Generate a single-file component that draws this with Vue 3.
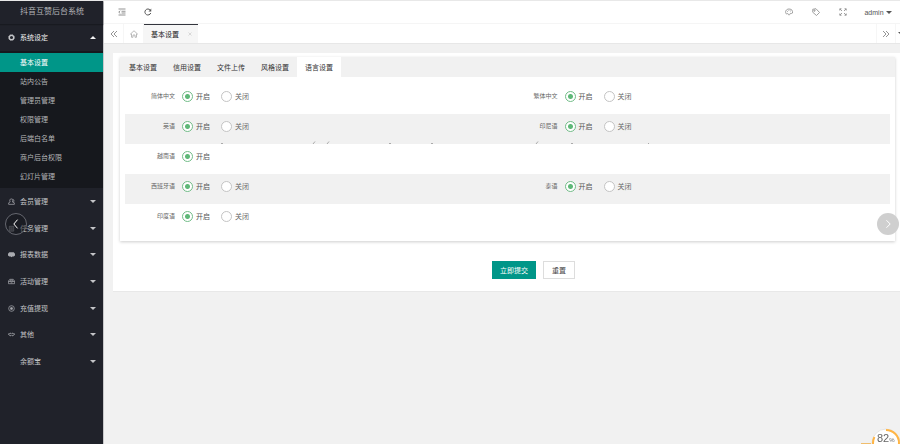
<script setup>
import { ref, reactive } from 'vue'

const subItems = ['基本设置', '站内公告', '管理员管理', '权限管理', '后端白名单', '商户后台权限', '幻灯片管理']
const activeSub = ref('基本设置')
const groups = [
  { name: '会员管理', icon: 'user' },
  { name: '任务管理', icon: 'task' },
  { name: '报表数据', icon: 'chat' },
  { name: '活动管理', icon: 'gift' },
  { name: '充值提现', icon: 'coin' },
  { name: '其他', icon: 'link' },
  { name: '余额宝', icon: '' }
]
const tabs = ['基本设置', '信用设置', '文件上传', '风格设置', '语言设置']
const activeTab = ref('语言设置')
const rows = [
  [{ key: 'zhs', label: '简体中文' }, { key: 'zht', label: '繁体中文' }],
  [{ key: 'en', label: '英语' }, { key: 'id', label: '印尼语' }],
  [{ key: 'vi', label: '越南语', single: true }],
  [{ key: 'es', label: '西班牙语' }, { key: 'th', label: '泰语' }],
  [{ key: 'hi', label: '印度语' }]
]
const state = reactive({ zhs: 'on', zht: 'on', en: 'on', id: 'on', vi: 'on', es: 'on', th: 'on', hi: 'on' })
const reset = () => Object.keys(state).forEach((k) => { state[k] = 'on' })
</script>

<template>
  <div class="app">
    <aside class="side">
      <div class="brand">抖音互赞后台系统</div>
      <nav>
        <button class="group open" type="button">
          <svg class="gi" viewBox="0 0 16 16"><circle cx="8" cy="8" r="5" fill="none" stroke="currentColor" stroke-width="3" /><circle cx="8" cy="8" r="6.7" fill="none" stroke="currentColor" stroke-width="2" stroke-dasharray="2.6 2.6" /></svg>
          <span>系统设定</span>
          <svg class="caret" viewBox="0 0 6 3"><path d="M0 3L3 0L6 3Z" /></svg>
        </button>
        <ul class="sub">
          <li v-for="s in subItems" :key="s">
            <a href="#" :class="{ on: s === activeSub }" @click.prevent="activeSub = s">{{ s }}</a>
          </li>
        </ul>
        <div class="groups">
          <button v-for="g in groups" :key="g.name" class="group" type="button">
            <svg class="gi" viewBox="0 0 16 16" fill="none" stroke="currentColor" stroke-width="1.6">
              <template v-if="g.icon === 'user'"><path d="M5 9C3 6 4 2 7.500 2S12 6 10 9M5 9L1.500 11V14.500H14.500V11L10 9M11 2.500C14 4 14 7 12.500 9.500" /></template>
              <template v-else-if="g.icon === 'task'"><path d="M3 3H13V14H3ZM5 6.500H11M5 9H11M5 11.500H11" /></template>
              <template v-else-if="g.icon === 'chat'"><path d="M3 3H13L16 6V10L13 12.500H10L8 14.500L6 12.500H3L0 10V6Z" fill="currentColor" stroke="none" /></template>
              <template v-else-if="g.icon === 'gift'"><path d="M1 7L4 3H12L15 7V13H1ZM1 8H15M5 8V5H11V8M6 11H10" /></template>
              <template v-else-if="g.icon === 'coin'"><circle cx="8" cy="8" r="6.500" /><circle cx="8" cy="8" r="2.500" fill="currentColor" /></template>
              <template v-else-if="g.icon === 'link'"><path d="M0 7H3C4 4 7 5 8 7C9 5 12 4 13 7H16M2 8C4 12 7 11 8 9C9 11 12 12 14 8" stroke-width="2" /></template>
            </svg>
            <span>{{ g.name }}</span>
            <svg class="caret" viewBox="0 0 6 3"><path d="M0 0H6L3 3Z" /></svg>
          </button>
        </div>
      </nav>
    </aside>

    <div class="main">
      <header class="top">
        <button type="button" aria-label="菜单"><svg viewBox="0 0 16 16"><path d="M1 2H15M7 6.500H15M7 10H15M1 14H15M4.500 5.500L1.500 8.200L4.500 11" /></svg></button>
        <button type="button" aria-label="刷新"><svg class="dark" viewBox="0 0 16 16"><path d="M13.500 10A6 6 0 1 1 12.500 4.200" /><path d="M14.500 1V7H9Z" class="fill" /></svg></button>
        <div class="right">
          <button type="button" aria-label="主题"><svg viewBox="0 0 16 16"><path d="M3 12C-1 8 2 2 8 2S16 6 15 10C14 12 12 10 10.500 11S10 14 8 14C6 14 7 11 5.500 11S4 13 3 12Z" /><path d="M4.500 7H6M7 5H8.500M10.500 6H12" /></svg></button>
          <button type="button" aria-label="标签"><svg viewBox="0 0 16 16"><path d="M1.500 2.500L8 1.500L15 9L9 15L1.500 8.500Z" /><circle cx="5" cy="5.300" r="1.300" /></svg></button>
          <button type="button" aria-label="全屏"><svg viewBox="0 0 16 16"><path d="M1.500 5V1.500H5M11 1.500H14.500V5M14.500 11V14.500H11M5 14.500H1.500V11M2 2L6 6M14 2L10 6M14 14L10 10M2 14L6 10" /></svg></button>
          <button type="button" class="user">admin<svg class="caret" viewBox="0 0 6 3"><path d="M0 0H6L3 3Z" /></svg></button>
        </div>
      </header>

      <div class="pages">
        <button type="button" aria-label="向左"><svg viewBox="0 0 16 16"><path d="M8 2L2 8L8 14M14 2L8 8L14 14" /></svg></button>
        <button type="button" aria-label="主页"><svg class="pale" viewBox="0 0 16 16"><path d="M1 8L8 1.500L15 8H13V14.500H10V10H6V14.500H3V8Z" /></svg></button>
        <div class="page">基本设置<button type="button" aria-label="关闭"><svg class="x" viewBox="0 0 8 8"><path d="M1 1L7 7M7 1L1 7" /></svg></button></div>
        <button type="button" class="next" aria-label="向右"><svg viewBox="0 0 16 16"><path d="M2 2L8 8L2 14M8 2L14 8L8 14" /></svg></button>
        <button type="button" class="more" aria-label="更多"><svg class="caret" viewBox="0 0 6 3"><path d="M0 0H6L3 3Z" /></svg></button>
      </div>

      <form class="card" @submit.prevent @reset.prevent="reset">
        <section class="panel">
          <div class="tabs" role="tablist">
            <button v-for="t in tabs" :key="t" type="button" role="tab" :class="{ on: t === activeTab }" @click="activeTab = t">{{ t }}</button>
          </div>
          <div class="rows">
            <div v-for="(row, i) in rows" :key="i" class="row">
              <div v-for="f in row" :key="f.key" class="field" role="radiogroup" :aria-labelledby="'l-' + f.key">
                <span :id="'l-' + f.key" class="name">{{ f.label }}</span>
                <label class="opt"><input v-model="state[f.key]" type="radio" :name="f.key" value="on" /><span>开启</span></label>
                <label v-if="!f.single" class="opt off"><input v-model="state[f.key]" type="radio" :name="f.key" value="off" /><span>关闭</span></label>
              </div>
              <svg v-if="i === 1" class="marks" viewBox="0 0 765 3" preserveAspectRatio="none"><path d="M96 2.500H98M188 3L190 0.500M202 3L204 0.500M264 2.500H266M306 2.500H308M411 3L413 0.500M446 2.500H448M523 2.500H524" /></svg>
            </div>
          </div>
        </section>
        <div class="actions">
          <button type="submit" class="btn primary">立即提交</button>
          <button type="reset" class="btn">重置</button>
        </div>
      </form>
    </div>

    <button class="nav prev" type="button" aria-label="上一张"><svg viewBox="0 0 16 16"><path d="M10.500 1L4.500 8L10.500 15" /></svg></button>
    <button class="nav forward" type="button" aria-label="下一张"><svg viewBox="0 0 16 16"><path d="M5.500 2L11.500 8L5.500 14" /></svg></button>
    <div class="gauge">
      <svg viewBox="0 0 30 30"><circle cx="15" cy="15" r="14" fill="#fff" stroke="#e4e4e4" stroke-width="1" /><circle cx="15" cy="15" r="13" fill="none" stroke="#ffb545" stroke-width="2" stroke-dasharray="67 15" transform="rotate(-90 15 15)" /></svg>
      <span>82<small>%</small></span>
    </div>
    <i class="gauge-tail"></i>
  </div>
</template>

<style>
body {
  background: #f1f1f1;
}
</style>

<style scoped>
.app {
  display: flex;
  box-sizing: border-box;
  min-height: 100vh;
  border-top: 1px solid #e8e8e8;
  font: 7px/1 "Liberation Sans", "Noto Sans CJK SC", sans-serif;
  color: #444;
  overflow: hidden;
}
button {
  display: flex;
  align-items: center;
  justify-content: center;
  padding: 0;
  border: 0;
  background: none;
  font: inherit;
  color: inherit;
}
svg {
  display: block;
  flex: none;
}
.side {
  flex: 0 0 104px;
  box-sizing: border-box;
  background: #20222a;
  color: #c4c5c8;
  border-right: 1px solid #c8c8ca;
}
.brand {
  height: 23px;
  line-height: 22px;
  padding-left: 20px;
  font-size: 8px;
  color: #b4b5b8;
  box-shadow: 0 1px 1px #181a20;
}
.group {
  width: 100%;
  height: 27px;
  justify-content: flex-start;
  gap: 5px;
  padding: 0 7px 0 8px;
}
.group.open {
  color: #f4f4f4;
}
.gi {
  width: 7px;
  height: 7px;
  color: #a9abb0;
}
.group.open .gi {
  color: #c4c5c8;
}
.caret {
  width: 6px;
  height: 3px;
  fill: currentColor;
  stroke: none;
}
.group .caret {
  margin-left: auto;
}
.sub {
  margin: 0;
  padding: 2px 0;
  list-style: none;
  background: #16181d;
}
.sub a {
  display: block;
  line-height: 19px;
  padding-left: 20px;
  color: #b4b5b7;
  text-decoration: none;
}
.sub a.on {
  background: #009688;
  color: #fff;
}
.groups {
  display: grid;
  grid-auto-rows: 1fr;
  min-height: 187px;
}
.groups .group {
  height: auto;
}
.main {
  flex: 1;
  min-width: 0;
}
.top,
.pages {
  display: flex;
  background: #fff;
}
.top {
  height: 22px;
  padding-left: 5px;
  border-bottom: 1px solid #f5f5f5;
}
.top button {
  width: 26px;
}
.top svg,
.pages svg {
  width: 8px;
  height: 8px;
  fill: none;
  stroke: #777;
  stroke-width: 1.6;
}
.top svg.dark {
  stroke: #555;
  stroke-width: 2;
}
.top svg .fill {
  fill: #555;
  stroke: none;
}
.top .right {
  display: flex;
  margin-left: auto;
}
.top .right svg {
  stroke: #888;
}
.top .right button {
  width: 27px;
}
.top .right .user {
  width: 44px;
  gap: 2px;
  color: #555;
}
.top svg.caret,
.top .right svg.caret,
.pages svg.caret {
  width: 6px;
  height: 3px;
  fill: #555;
  stroke: none;
}
.pages {
  height: 19px;
  border-bottom: 1px solid #e7e7e7;
}
.pages > button {
  width: 20px;
  border-right: 1px solid #f6f6f6;
}
.pages svg.pale {
  stroke: #aaa;
}
.pages svg.x {
  width: 4px;
  height: 4px;
  stroke: #bbb;
  stroke-width: 1;
}
.page {
  display: flex;
  align-items: center;
  gap: 9px;
  padding: 0 6px 0 7px;
  background: #f6f6f6;
  border-top: 1px solid #33353d;
  color: #222;
}
.pages .next {
  margin-left: auto;
  border-left: 1px solid #f6f6f6;
}
.pages .more {
  width: 10px;
  border: 0;
  margin-right: -6px;
}
.card {
  margin: 9px 0 0 9px;
  padding: 4px 5px 12px 7px;
  background: #fff;
  border-bottom: 1px solid #e8e8e8;
}
.panel {
  box-shadow: 0 1px 3px rgba(0, 0, 0, 0.2);
}
.tabs {
  display: flex;
  padding-left: 1px;
  background: #f1f1f1;
}
.tabs button {
  height: 20px;
  padding: 0 8px;
  color: #333;
}
.tabs .on {
  background: #fff;
}
.rows {
  padding: 7px 5px;
}
.row {
  display: grid;
  grid-template-columns: 1fr 1fr;
  position: relative;
}
.row:nth-child(even) {
  background: #f1f1f1;
}
.field {
  display: flex;
  align-items: center;
  height: 24px;
  padding-bottom: 6px;
}
.name {
  width: 50px;
  margin-right: 7px;
  text-align: right;
  font-size: 6px;
  color: #666;
}
.opt {
  display: flex;
  align-items: center;
  gap: 3px;
  color: #555;
}
.off {
  margin-left: 11px;
  color: #666;
}
.opt input {
  appearance: none;
  box-sizing: border-box;
  width: 11px;
  height: 11px;
  margin: 0;
  border: 1px solid #c4c4c4;
  border-radius: 50%;
  background: #fff;
}
.opt input:checked {
  border-color: #72bd88;
  background: radial-gradient(circle, #5fb878 2px, #fff 3px);
}
.marks {
  position: absolute;
  left: 0;
  bottom: 0;
  width: 100%;
  height: 3px;
  stroke: #aaa;
  stroke-width: 1;
  fill: none;
}
.actions {
  display: flex;
  justify-content: center;
  gap: 7px;
  padding: 20px 0 0 52px;
}
.btn {
  min-width: 32px;
  height: 18px;
  padding: 0 7px;
  border: 1px solid #ddd;
  background: #fff;
  color: #444;
}
.btn.primary {
  border-color: #009688;
  background: #009688;
  color: #fff;
}
.nav {
  position: fixed;
  top: 50%;
  width: 22px;
  height: 22px;
  margin-top: -9px;
  border-radius: 50%;
}
.nav svg {
  width: 10px;
  height: 10px;
  fill: none;
  stroke: #fff;
  stroke-width: 1.6;
}
.prev {
  left: 5px;
  background: rgba(20, 22, 27, 0.5);
  border: 1px solid #666870;
}
.forward {
  right: 1px;
  background: #cfcfcf;
}
.gauge {
  position: fixed;
  right: -1px;
  bottom: -14px;
  width: 30px;
  height: 30px;
}
.gauge span {
  position: absolute;
  top: 5px;
  left: 6px;
  font-size: 11px;
  color: #666;
}
.gauge small {
  font-size: 6px;
}
.gauge-tail {
  position: fixed;
  right: 29px;
  bottom: 0;
  width: 10px;
  height: 1px;
  background: #f0bd6c;
}
</style>
